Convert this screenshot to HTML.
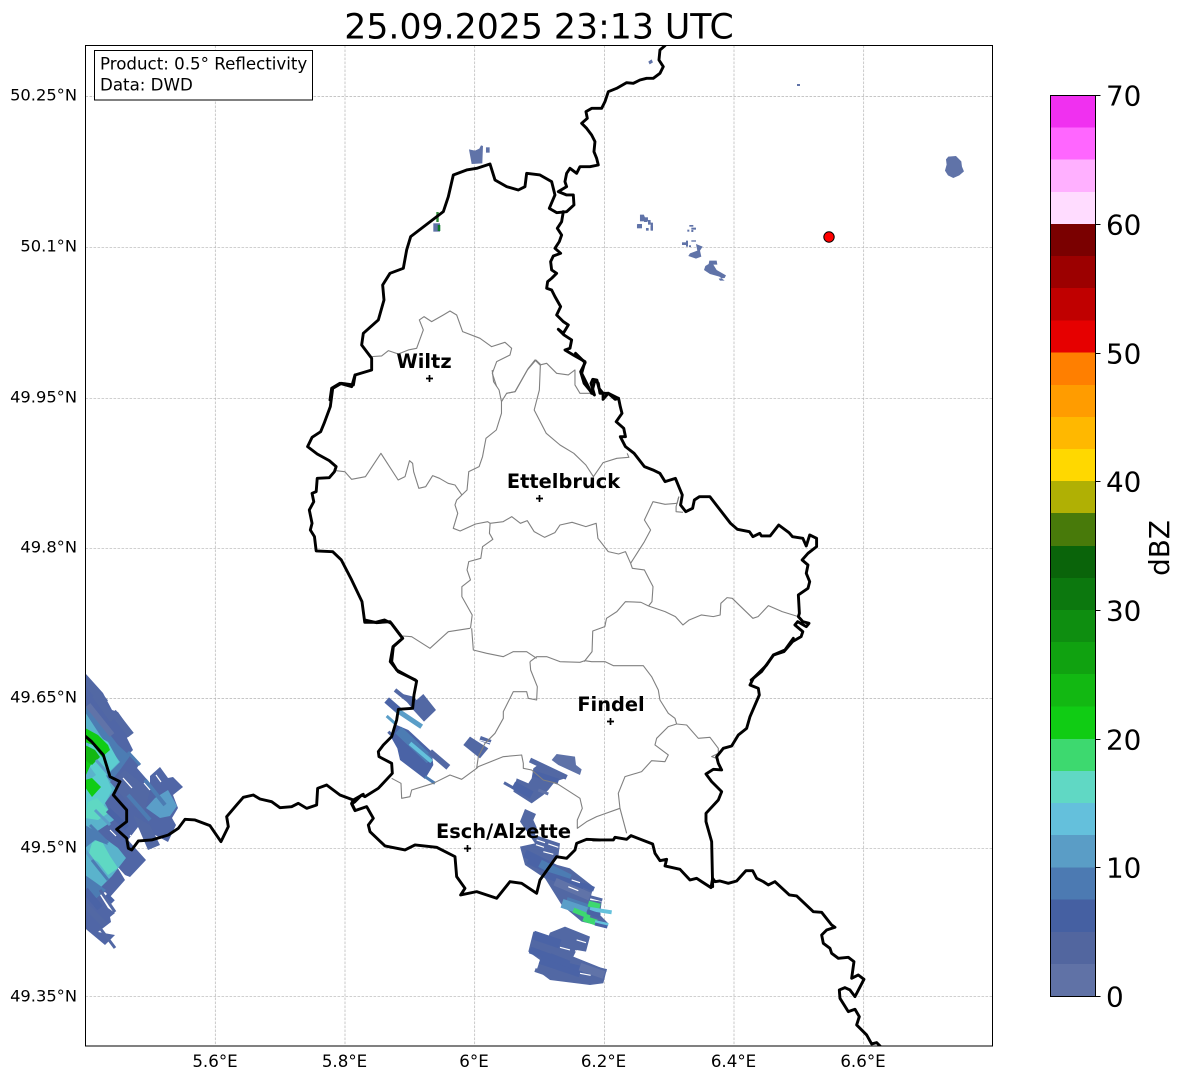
<!DOCTYPE html>
<html><head><meta charset="utf-8"><title>Radar</title>
<style>
html,body{margin:0;padding:0;background:#fff}
svg{display:block;font-family:"DejaVu Sans","Liberation Sans",sans-serif}
.n *{vector-effect:non-scaling-stroke}
.b polyline{fill:none;stroke:#000;stroke-width:2.9;stroke-linejoin:round;stroke-linecap:round}
.g polyline{fill:none;stroke:#808080;stroke-width:1.1;stroke-linejoin:round}
.r path{fill:none;stroke-linecap:butt}
.c0{stroke:#6073a8}.c1{stroke:#5268a4}.c2{stroke:#4a63a6}.c3{stroke:#4c7cb3}.c4{stroke:#5a9ec8}.c5{stroke:#64c1dc}.c6{stroke:#5fd8c3}.c7{stroke:#3dd870}.c8{stroke:#10cc14}
.w{stroke:#fff}
.t{font-size:16.67px;fill:#000}
.ty{font-size:16.3px;fill:#000}
.cb{font-size:27.8px;fill:#000}
.city{font-size:19.4px;font-weight:bold;fill:#000;text-anchor:middle}
</style></head><body>
<svg width="1184" height="1081" viewBox="0 0 1184 1081" xmlns="http://www.w3.org/2000/svg">
<defs><clipPath id="ax"><rect x="85.5" y="45.5" width="907" height="1000.5"/></clipPath></defs>
<rect width="1184" height="1081" fill="#fff"/>
<text x="539" y="38.5" font-size="34.7" text-anchor="middle">25.09.2025 23:13 UTC</text>

<!-- grid -->
<g stroke="#b4b4b4" stroke-width="0.7" stroke-dasharray="2.6 1.4" fill="none">
<path d="M215.3 45.5V1046M345 45.5V1046M474.7 45.5V1046M604.4 45.5V1046M734 45.5V1046M863.7 45.5V1046"/>
<path d="M85.5 96.5H992.5M85.5 247.3H992.5M85.5 398.3H992.5M85.5 548.3H992.5M85.5 698.6H992.5M85.5 848.7H992.5M85.5 996.7H992.5"/>
</g>

<g clip-path="url(#ax)">
<!-- radar: left cluster -->
<g class="r">
<polygon fill="#5066a6" points="85,673 103,693 112,710 118,712 132,732 127,738 133,750 130,753 140,763 137,768 150,783 150,776 160,767 168,778 173,777 183,787 173,795 178,808 172,818 176,825 168,842 155,835 146,838 138,827 128,840 146,860 130,877 125,875 116,865 125,880 110,897 105,892 100,895 108,908 115,913 110,917 111,922 98,932 115,935 105,945 87,930 85,928"/>
<polygon fill="#4c7cb3" points="85,705 97,718 118,745 130,756 120,770 104,790 85,760"/>
<polygon fill="#5ab3cc" points="85,712 100,735 120,762 106,776 116,788 105,803 114,820 96,832 118,848 126,858 112,876 96,892 85,882"/>
<polygon fill="#5ccdd0" points="92,733 108,742 119,762 106,775 112,790 104,805 85,812 85,783 96,775 85,760"/>
<polygon fill="#5fd8c3" points="88,802 97,798 110,812 98,820 85,818"/>
<polygon fill="#5fd8c3" points="92,843 100,838 110,856 118,868 108,875 98,862 88,856"/>
<polygon fill="#4c7cb3" points="85,825 97,832 108,845 95,840 85,848"/>
<polygon fill="#4c7cb3" points="85,875 95,882 106,890 92,902 85,895"/>
<polygon fill="#10cc14" points="85,728 98,735 108,745 110,750 102,757 93,745 85,742"/>
<polygon fill="#10cc14" points="85,756 93,760 85,777"/>
<polygon fill="#10cc14" points="85,780 92,778 101,787 92,797 85,787"/>
<polygon fill="#12b812" points="85,745 95,750 100,757 92,765 85,760"/>
<polygon fill="#5a9ec8" points="146,808 155,798 168,790 177,806 170,816 160,818"/>
<polygon fill="#5268a4" points="110,782 125,770 150,790 145,812 130,805"/>
<polygon fill="#5268a4" points="133,815 150,825 160,845 148,850"/>
<path class="c1" d="M85 680L105 703" stroke-width="8"/>
<path class="c1" d="M95 695L113 720" stroke-width="7"/>
<path class="c0" d="M88 705L112 735" stroke-width="6"/>
<path class="c1" d="M113 712L131 735" stroke-width="7"/>
<path class="c3" d="M128 752L140 765" stroke-width="3"/>
<path class="c3" d="M128 795L150 820" stroke-width="4"/>
<path class="c3" d="M145 780L165 805" stroke-width="4"/>
<path class="c4" d="M96 760L112 778" stroke-width="3"/>
<path class="c4" d="M95 810L110 825" stroke-width="3"/>
<path class="c3" d="M90 825L108 843" stroke-width="3"/>
<path class="c4" d="M85 850L100 870" stroke-width="3"/>
<path class="w" d="M123 778L132 788M144 783L150 790M156 775L161 782M110 830L116 836M130 835L137 842" stroke-width="1.2"/>
<path class="c2" d="M106 895L113 902" stroke-width="5"/>
<path class="c1" d="M100 890L115 912" stroke-width="3"/>
<path class="c1" d="M100 928L115 948" stroke-width="3"/>
<path class="c3" d="M92 860L108 880" stroke-width="3"/>
<path class="c2" d="M108 810L127 828" stroke-width="6"/>
<path class="c1" d="M85 905L105 925" stroke-width="6"/>
<path class="c2" d="M85 890L100 908" stroke-width="7"/>
</g>

<!-- radar: middle cluster (zoom coords) -->
<g class="r n" transform="translate(380,680) scale(.3333)">
<path class="c1" d="M45 30L95 70" stroke-width="4"/>
<polygon fill="#5268a4" points="60,40 100,50 110,60 130,42 168,90 132,125 100,90"/>
<path class="c2" d="M20 60L60 95" stroke-width="7"/>
<path class="c4" d="M50 90L125 140" stroke-width="5"/>
<path class="c4" d="M20 108L45 130" stroke-width="3"/>
<path class="c1" d="M25 155L45 175" stroke-width="3"/>
<polygon fill="#4a63a6" points="50,135 85,150 155,215 160,255 135,297 60,240 52,205 35,175"/>
<path class="c3" d="M55 150L150 240" stroke-width="9"/>
<path class="c5" d="M90 190L155 245" stroke-width="4"/>
<path class="c1" d="M150 215L205 262" stroke-width="6"/>
<path class="c3" d="M135 290L165 310" stroke-width="3"/>
<polygon fill="#5268a4" points="250,195 270,170 325,205 300,235"/>
<path class="c1" d="M300 175L332 187" stroke-width="5"/>
<path class="w" d="M290 178L335 190" stroke-width="1"/>
</g>

<!-- radar: south clusters (zoom coords) -->
<g class="r n" transform="translate(500,740) scale(.3333)">
<polygon fill="#5268a4" points="100,85 120,70 200,105 195,115 165,125 145,150 130,165 95,190 40,155 50,115 85,130 95,115"/>
<polygon fill="#5e72a8" points="155,60 170,42 225,50 228,75 245,88 240,105 175,75"/>
<polygon fill="#5268a4" points="75,207 108,222 100,240 110,262 105,285 180,310 175,350 155,370 210,385 280,440 270,480 305,485 300,525 325,550 320,562 245,545 185,495 135,415 75,375 60,320 105,310 60,245"/>
<polygon fill="#5268a4" points="100,575 145,590 150,578 195,560 270,590 258,635 230,630 220,650 320,690 310,730 270,735 150,720 110,690 120,660 85,635"/>
<path class="c1" d="M90 60L200 112" stroke-width="5"/>
<path class="c2" d="M100 100L175 125" stroke-width="6"/>
<path class="c1" d="M12 128L60 155" stroke-width="3"/>
<path class="c2" d="M40 135L95 165" stroke-width="8"/>
<path class="c0" d="M115 150L145 162" stroke-width="3"/>
<path class="c2" d="M75 340L165 385" stroke-width="8"/>
<path class="c2" d="M85 360L195 410" stroke-width="8"/>
<path class="c3" d="M120 370L210 415" stroke-width="8"/>
<path class="c2" d="M140 405L250 440" stroke-width="7"/>
<path class="c0" d="M165 425L270 470" stroke-width="8"/>
<path class="c2" d="M250 435L282 448" stroke-width="5"/>
<path class="c3" d="M200 480L275 505" stroke-width="6"/>
<path class="c4" d="M186 490L260 515" stroke-width="9"/>
<path class="c1" d="M270 470L307 480" stroke-width="3"/>
<path class="c7" d="M265 491L300 500" stroke-width="6"/>
<path class="c7" d="M220 510L270 530" stroke-width="5"/>
<path class="c7" d="M250 535L290 548" stroke-width="6"/>
<path class="c5" d="M270 507L335 517" stroke-width="4"/>
<path class="c2" d="M262 515L300 528" stroke-width="5"/>
<path class="c5" d="M285 545L325 554" stroke-width="3"/>
<path class="c2" d="M285 552L322 561" stroke-width="3"/>
<path class="w" d="M108 314L132 322M130 335L160 343M145 312L175 322M205 440L235 452M110 300L135 308M215 420L240 428" stroke-width="1.2"/>
<path class="c2" d="M100 585L180 612" stroke-width="9"/>
<path class="c2" d="M90 630L200 670" stroke-width="7"/>
<path class="c2" d="M120 660L240 700" stroke-width="8"/>
<path class="c2" d="M150 650L250 690" stroke-width="7"/>
<path class="c1" d="M210 665L320 692" stroke-width="3"/>
<path class="c1" d="M105 690L150 705" stroke-width="4"/>
<path class="c0" d="M240 680L312 705" stroke-width="8"/>
<path class="w" d="M180 622L210 630M230 600L258 608M240 700L272 706M255 642L225 632" stroke-width="1.2"/>
</g>

<!-- small specks -->
<g fill="#6073a8" class="n">
<g transform="translate(280,40) scale(.3333)">
<polygon points="567,328 585,332 598,326 603,316 609,318 607,370 575,372"/>
<rect x="618" y="322" width="11" height="16"/>
<polygon points="1105,65 1115,58 1119,67 1109,73"/>
<rect x="460" y="550" width="20" height="25"/>
<rect x="1080" y="524" width="12" height="20"/><rect x="1092" y="532" width="12" height="12"/><rect x="1104" y="540" width="8" height="8"/><rect x="1071" y="553" width="15" height="12"/><rect x="1112" y="548" width="7" height="23"/><rect x="1098" y="565" width="6" height="6"/>
</g>
<g transform="translate(620,130) scale(.3333)">
<rect x="52" y="282" width="14" height="12"/><polygon points="60,255 72,255 78,270 66,272"/><rect x="72" y="268" width="10" height="8"/><rect x="84" y="276" width="8" height="8"/><rect x="78" y="294" width="8" height="8"/><rect x="92" y="288" width="7" height="14"/>
<rect x="208" y="285" width="12" height="5"/><rect x="202" y="299" width="6" height="6"/><rect x="214" y="293" width="14" height="6"/><rect x="214" y="300" width="6" height="6"/>
<rect x="186" y="337" width="14" height="8"/><rect x="198" y="332" width="6" height="18"/><rect x="214" y="331" width="14" height="4"/><rect x="207" y="346" width="6" height="5"/>
<polygon points="228,342 248,350 240,362 244,380 228,386 205,378 210,370 232,362"/>
<polygon points="268,392 290,392 292,404 280,404 290,420 318,436 314,444 296,446 300,452 314,452 298,440 270,432 252,420 256,408 266,402"/>
<polygon points="985,80 1008,78 1024,94 1026,110 1032,124 1018,136 1000,144 984,136 975,122 980,104 978,88"/>
</g>
<rect x="797" y="84" width="3" height="2"/>
</g>
<path d="M437.5 212V222" stroke="#2f8a37" stroke-width="2.4" fill="none"/>
<path d="M439 225V231" stroke="#0f7a2a" stroke-width="2.6" fill="none"/>

<!-- grey canton lines -->
<g class="g n">
<g transform="translate(280,40) scale(.3333)">
<polyline points="275,950 305,948 325,932 355,942 385,930 410,925 430,870 418,840 432,830 455,845 490,825 510,813 530,825 548,875 600,895 635,920 675,907 695,925 690,945 650,965 637,1000 650,1040"/>
<polyline points="680,1060 705,1055 745,985 765,960 780,975 800,970 830,1000 865,1005 885,990 885,1035 900,1060 930,1060"/>
</g>
<g transform="translate(300,350) scale(.3444,.3333)">
<polyline points="558,60 562,95 578,120 585,155 585,190 570,240 540,265 530,320 520,350 490,365 485,420 470,435 455,450 450,465 458,490 445,535 465,543 510,522 545,515 552,520"/>
<polyline points="585,155 600,130 625,125 660,60 685,30 698,43"/>
<polyline points="698,43 695,120 680,180 695,210 715,250 755,285 795,310 830,345 852,380 880,338 920,325 955,322 950,310"/>
<polyline points="105,362 130,365 150,388 190,380 235,310 260,350 285,390 305,380 318,332 327,340 330,365 345,415 365,410 385,377 405,385 430,400 450,405 470,435"/>
<polyline points="552,520 590,515 615,500 640,520 660,512 680,545 710,562 740,548 755,525 790,517 830,530 860,520 865,565 895,605 925,612 945,605 960,640 965,655 1000,660 1025,710 1022,755 1012,768"/>
<polyline points="552,520 550,550 560,568 530,590 525,625 490,635 485,660 495,690 470,710 470,740 500,795 495,835"/>
<polyline points="1100,440 1095,460 1060,463 1025,455 1000,510 1018,540 1000,575 960,640"/>
<polyline points="1100,440 1092,470 1092,485 1112,487"/>
<polyline points="1012,768 990,757 945,755 920,785 890,805 885,830 850,843 848,905 825,935"/>
<polyline points="1012,768 1060,785 1090,800 1112,825 1130,810 1165,795 1200,800 1220,795 1222,760 1240,743 1255,745 1315,805 1330,800 1360,767 1400,785 1447,800"/>
</g>
<g transform="translate(340,620) scale(.3333)">
<polyline points="570,125 590,110 620,110 660,125 720,127 735,122 755,125 795,125 820,137 910,137 935,170 955,210 960,240 985,280 1005,295 1010,312"/>
<polyline points="1010,312 985,320 950,355 945,375 985,405 975,425 935,422 905,455 855,470 835,520 840,565 860,640"/>
<polyline points="840,565 770,590 740,605 712,625 712,600 727,565 720,535 650,490 610,480 575,450 550,445 550,430 545,405 490,410 415,440 410,445 365,478 330,465 280,490 215,510 210,530 185,535 183,490 155,475"/>
<polyline points="410,445 415,410 435,370 465,340 490,295 490,275 520,215 560,215 565,235 590,240 592,200 572,150 570,125"/>
<polyline points="395,25 400,90 440,100 490,110 520,95 560,95 590,115"/>
<polyline points="188,48 215,50 270,85 325,35 390,25"/>
<polyline points="1010,312 1040,315 1075,355 1110,352 1135,385 1135,400 1115,410 1130,415"/>
</g>
</g>

<!-- black border -->
<g class="b n">
<g transform="translate(280,40) scale(.3333)">
<polyline points="1155,17 1140,30 1137,60 1150,80 1140,100 1120,115 1100,115 1080,120 1060,130 1040,128 1010,145 985,155 975,185 965,205 935,205 918,215 922,235 905,250 920,265 935,285 945,305 942,335 950,355 955,375 930,380 900,380 890,400 870,385 860,400 855,425 860,440 835,455 860,465 880,465 882,495 860,515 830,518 808,505 825,465 815,425 780,405 740,400 735,440 715,450 680,440 645,420 630,372 590,385 560,390 520,405 505,470 490,515 392,590 380,630 370,685 330,700 308,735 312,780 295,840 250,880 245,915 275,955 275,990 225,1005 215,1040 180,1030 155,1045 150,1080"/>
<polyline points="850,515 845,545 832,565 845,585 838,605 825,625 842,640 820,648 812,665 815,690 830,700 815,715 803,725 800,745 815,750 825,770 842,800 830,825 850,845 865,855 850,880 835,868 852,885 875,900 870,925 855,930 880,945 915,965 905,1000 925,1040 935,1060 945,1020 955,1030 960,1060 985,1060 1015,1075"/>
</g>
<g transform="translate(300,350) scale(.3444,.3333)">
<polyline points="160,75 155,105 120,100 95,115 88,170 70,220 60,245 35,262 22,290 50,312 85,332 105,350 100,365 85,383 50,385 47,425 35,430 40,455 27,480 35,520 30,540 42,560 47,603 95,605 120,630 150,690 180,755 188,817 220,817 245,810 265,820 298,865 270,890 262,935 285,965 335,990"/>
<polyline points="800,10 828,38 815,65 825,100 845,125 855,135 845,100 850,88 862,90 868,115 880,130 880,148 895,130 915,148 925,145 930,170 935,190 918,215 940,235 945,260 930,260 945,290 970,310 1000,350 1025,360 1045,370 1060,395 1090,385 1100,410 1110,435 1105,465 1120,485 1140,475 1145,450 1160,440 1190,440 1250,520 1270,538 1305,545 1315,560 1335,550 1340,558 1365,558 1390,525 1420,548 1430,560 1460,565 1470,588 1480,555 1500,565 1500,590 1475,610 1458,630 1475,645 1470,670 1480,695 1475,715 1447,735 1450,790 1447,800 1460,815 1478,820 1470,830 1445,815 1437,825 1460,845 1455,860 1430,875 1405,905 1375,915 1340,965 1310,990"/>
</g>
<g transform="translate(600,620) scale(.3333)">
<polyline points="580,55 555,90 520,105 500,135 460,175 450,195 475,205 478,225 450,290 440,325 415,345 395,378 370,385 350,410 355,430 365,450 340,448 318,462 335,485 365,515 355,540 318,580 318,605 335,665 338,800"/>
<polyline points="-20,660 40,660 45,652 80,658 93,647 158,672 165,700 180,722 200,718 195,738 240,748 270,780 290,775 305,785 333,803 338,775 345,785 360,783 385,790 410,783 438,752 458,752 470,775 490,785 505,795 525,785 568,825 590,828 640,875 665,877 695,915 705,922 680,930 665,945 670,970 690,985 695,1000 715,1015 745,1012 762,1025 755,1075 775,1065 792,1078 765,1130 750,1110 735,1103 718,1110 720,1135 745,1175 765,1168 778,1190 770,1215 800,1245 815,1272 830,1268 840,1278"/>
</g>
<g transform="translate(340,620) scale(.3333)">
<polyline points="75,0 110,8 150,5 188,55 160,80 155,125 170,150 230,183 222,225 218,265 175,268 170,300 155,350 130,375 115,395 117,410 155,430 157,460 115,505 75,530 65,525 45,545 35,552 45,572 80,560 100,595 85,615 90,635 135,678 195,690 225,675 290,682 345,710 350,770 375,805 362,825 410,815 470,835 510,785 545,790 590,820 600,780 650,710 680,715 705,690 710,670 740,658 780,660"/>
</g>
<g transform="translate(85,660) scale(.3333)">
<polyline points="0,228 20,245 55,285 75,350 105,365 85,405 125,450 125,485 95,508 125,535 130,565 140,570 160,543 200,540 250,525 280,505 300,478 330,480 375,497 408,545 430,500 425,470 455,435 475,412 505,405 525,417 560,425 585,443 620,440 640,430 665,445 695,435 698,385 725,375 765,405 805,420 835,403"/>
<polyline points="805,420 800,430 810,450"/>
</g>
</g>

<!-- city markers -->
<g stroke="#000" stroke-width="1.7" fill="none">
<path d="M426 378.5H433M429.5 375V382"/>
<path d="M536 498.5H543M539.5 495V502"/>
<path d="M607 721.5H614M610.5 718V725"/>
<path d="M464 848.5H471M467.5 845V852"/>
</g>
<text class="city" x="424" y="368">Wiltz</text>
<text class="city" x="563.5" y="488">Ettelbruck</text>
<text class="city" x="611" y="711">Findel</text>
<text class="city" x="503.5" y="838">Esch/Alzette</text>
<circle cx="829" cy="237" r="5.2" fill="#f00" stroke="#000" stroke-width="1"/>
</g>

<!-- axes frame -->
<rect x="85.5" y="45.5" width="907" height="1000.5" fill="none" stroke="#000" stroke-width="1"/>

<!-- info box -->
<rect x="94.5" y="50.5" width="218" height="49.5" fill="#fff" stroke="#000" stroke-width="1"/>
<text x="100" y="69.5" class="t">Product: 0.5° Reflectivity</text>
<text x="100" y="90.5" class="t">Data: DWD</text>

<!-- tick labels -->
<g class="ty" text-anchor="end">
<text x="77" y="100.5">50.25°N</text>
<text x="77" y="251.5">50.1°N</text>
<text x="77" y="402.5">49.95°N</text>
<text x="77" y="552.5">49.8°N</text>
<text x="77" y="702.5">49.65°N</text>
<text x="77" y="852.5">49.5°N</text>
<text x="77" y="1001.5">49.35°N</text>
</g>
<g class="t" text-anchor="middle">
<text x="215" y="1067">5.6°E</text>
<text x="344.5" y="1067">5.8°E</text>
<text x="474" y="1067">6°E</text>
<text x="603.5" y="1067">6.2°E</text>
<text x="733.5" y="1067">6.4°E</text>
<text x="863" y="1067">6.6°E</text>
</g>

<!-- colorbar -->
<g shape-rendering="crispEdges">
<rect x="1050.5" y="95.5" width="45" height="32.5" fill="#f030f0"/>
<rect x="1050.5" y="127.5" width="45" height="32.5" fill="#ff66ff"/>
<rect x="1050.5" y="159.5" width="45" height="33" fill="#ffb0ff"/>
<rect x="1050.5" y="192" width="45" height="32.5" fill="#ffdcff"/>
<rect x="1050.5" y="224" width="45" height="32.5" fill="#7a0000"/>
<rect x="1050.5" y="256" width="45" height="32.5" fill="#9c0000"/>
<rect x="1050.5" y="288" width="45" height="32.5" fill="#c00000"/>
<rect x="1050.5" y="320.5" width="45" height="32.5" fill="#e60000"/>
<rect x="1050.5" y="352.5" width="45" height="32.5" fill="#ff7f00"/>
<rect x="1050.5" y="385" width="45" height="32.5" fill="#ff9c00"/>
<rect x="1050.5" y="417" width="45" height="32.5" fill="#ffb800"/>
<rect x="1050.5" y="449" width="45" height="32.5" fill="#ffd800"/>
<rect x="1050.5" y="481" width="45" height="32.5" fill="#b0b004"/>
<rect x="1050.5" y="513" width="45" height="33.5" fill="#487a0a"/>
<rect x="1050.5" y="546" width="45" height="32.5" fill="#0a640a"/>
<rect x="1050.5" y="578" width="45" height="32.5" fill="#0c780e"/>
<rect x="1050.5" y="610" width="45" height="32.5" fill="#0e8e10"/>
<rect x="1050.5" y="642" width="45" height="32.5" fill="#10a210"/>
<rect x="1050.5" y="674" width="45" height="33" fill="#12b812"/>
<rect x="1050.5" y="706.5" width="45" height="33" fill="#10cc14"/>
<rect x="1050.5" y="739" width="45" height="32.5" fill="#3dd96f"/>
<rect x="1050.5" y="771" width="45" height="32.5" fill="#60d8c4"/>
<rect x="1050.5" y="803" width="45" height="32.5" fill="#64c0dc"/>
<rect x="1050.5" y="835" width="45" height="33" fill="#5a9dc6"/>
<rect x="1050.5" y="867.5" width="45" height="32.5" fill="#4c7ab2"/>
<rect x="1050.5" y="899.5" width="45" height="33" fill="#4560a2"/>
<rect x="1050.5" y="932" width="45" height="32.5" fill="#52669f"/>
<rect x="1050.5" y="964" width="45" height="32.5" fill="#6072a6"/>
</g>
<rect x="1050.5" y="95.5" width="45" height="901" fill="none" stroke="#000" stroke-width="1"/>
<path d="M1095.5 95.5h5M1095.5 224.5h5M1095.5 353.5h5M1095.5 481.5h5M1095.5 610.5h5M1095.5 739.5h5M1095.5 867.5h5M1095.5 996.5h5" stroke="#000" stroke-width="1"/>
<g class="cb">
<text x="1106" y="105.5">70</text>
<text x="1106" y="234.5">60</text>
<text x="1106" y="363.5">50</text>
<text x="1106" y="491.5">40</text>
<text x="1106" y="620.5">30</text>
<text x="1106" y="749.5">20</text>
<text x="1106" y="877.5">10</text>
<text x="1106" y="1006.5">0</text>
</g>
<text class="cb" transform="translate(1169,548) rotate(-90)" text-anchor="middle">dBZ</text>
</svg>
</body></html>
